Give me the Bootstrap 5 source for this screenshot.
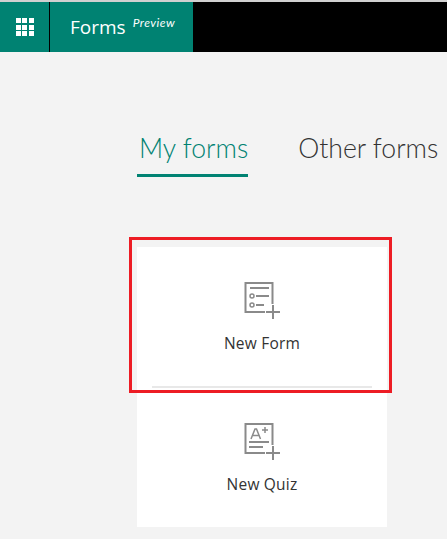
<!DOCTYPE html>
<html lang="en">

<head>
   <meta charset="UTF-8">
   <title>Forms</title>
   <link href="https://cdn.jsdelivr.net/npm/bootstrap@5.3.0/dist/css/bootstrap.min.css" rel="stylesheet">
   <style>
      html, body { height: 100%; overflow: hidden; }
      body { background: #f3f3f3; font-family: "Open Sans", "Noto Sans", sans-serif; color: #333; border-top: 2px solid #d0d0d0; }
      .topbar { height: 50px; background: #000; }
      .brandbar { width: 193px; background: #008272; color: #fff; }
      .waffle { width: 50px; border-right: 1px solid #000; }
      .waffle-grid { display: grid; grid-template-columns: repeat(3, 5px); gap: 1.5px; }
      .waffle-grid i { display: block; height: 5px; background: #fff; }
      .brandname { margin-left: 20px; font-size: 19px; line-height: 50px; }
      .previewtag { font-family: "Lato", sans-serif; font-style: italic; font-size: 12px; letter-spacing: .5px; margin-left: 7px; margin-top: 15px; line-height: 12px; }
      .tabsrow { margin: 70px 0 0 137px; gap: 50px; white-space: nowrap; }
      .tabitem { font-family: "Lato", sans-serif; font-size: 26.6px; font-weight: 300; line-height: 52px; height: 55px; color: #333; }
      .tabitem.on { color: #008272; border-bottom: 3px solid #008272; padding-left: 2px; }
      .cardstack { width: 250px; margin: 70px 0 0 137px; background: #fff; position: relative; }
      .tile { height: 139px; padding-top: 35px; font-size: 15.5px; letter-spacing: .2px; }
      .tile svg { display: block; margin: 0 auto 12px; }
      .rule { height: 2px; margin: 0 15px; background: #e8e8e8; }
      .redbox { position: absolute; left: -8px; top: -10px; width: 263px; height: 156px; border: 3px solid #ed1c24; pointer-events: none; }
   </style>
</head>

<body>
   <div class="topbar d-flex">
      <div class="brandbar d-flex">
         <div class="waffle d-flex align-items-center justify-content-center">
            <div class="waffle-grid">
               <i></i><i></i><i></i><i></i><i></i><i></i><i></i><i></i><i></i>
            </div>
         </div>
         <div class="brandname">Forms</div>
         <div class="previewtag">Preview</div>
      </div>
   </div>

   <div class="tabsrow d-flex">
      <div class="tabitem on">My forms</div>
      <div class="tabitem">Other forms</div>
   </div>

   <div class="cardstack">
      <div class="tile text-center">
         <svg width="36" height="38" viewBox="0 0 36 38" fill="none" stroke="#8a8a8a" stroke-width="2">
            <path d="M21 30H1.500V1h27v21"/>
            <path d="M6 6h19M12 14h13M12 23h8"/>
            <circle cx="8" cy="14" r="2" stroke-width="1.500"/>
            <circle cx="8" cy="23" r="2" stroke-width="1.500"/>
            <path d="M29 23v14M22 30h14"/>
         </svg>
         New Form
      </div>
      <div class="rule"></div>
      <div class="tile text-center">
         <svg width="36" height="38" viewBox="0 0 36 38" fill="none" stroke="#8a8a8a" stroke-width="2">
            <path d="M21 30H1.500V1h27v21"/>
            <path d="M7 16l4-10h1.500l4 10M8.500 12.500h6.500" stroke-width="1.500"/>
            <path d="M18 7h6M21 4v6" stroke-width="1.500"/>
            <path d="M5 19h20M5 24h14"/>
            <path d="M29 23v14M22 30h14"/>
         </svg>
         New Quiz
      </div>
      <div class="redbox"></div>
   </div>
</body>

</html>
